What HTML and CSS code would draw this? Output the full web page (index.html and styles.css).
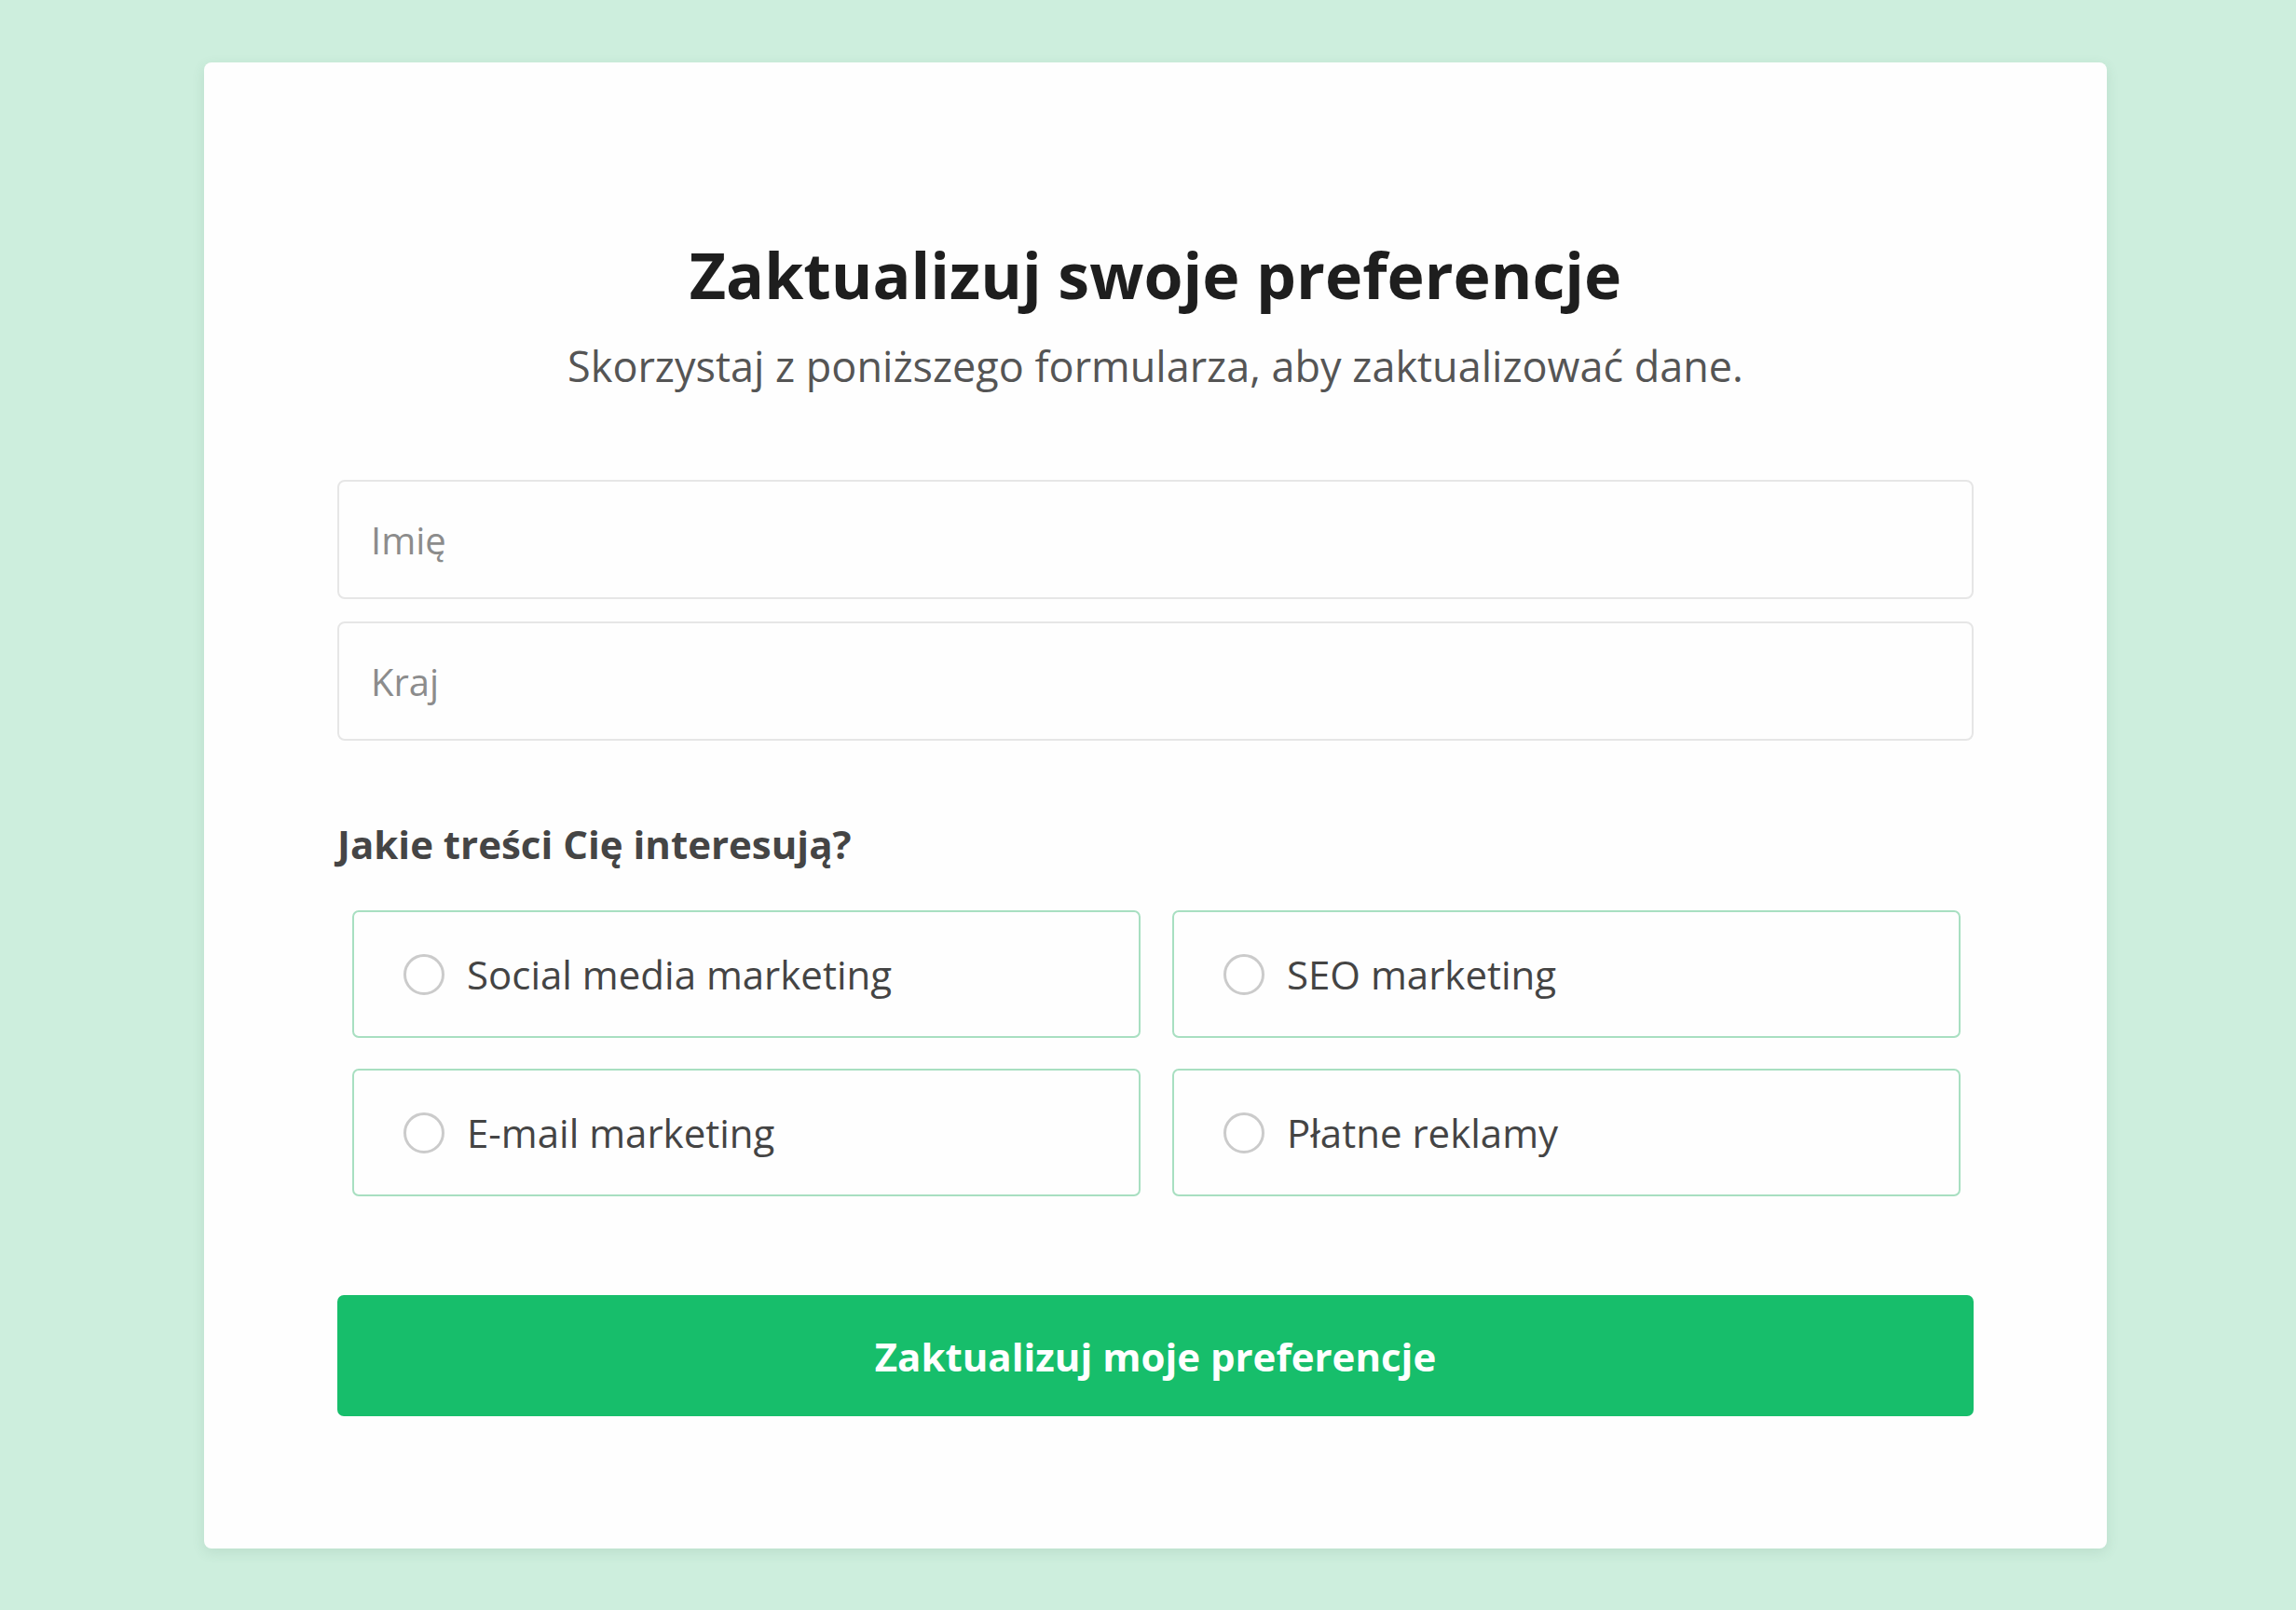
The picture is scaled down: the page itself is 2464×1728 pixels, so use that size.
FILE: index.html
```html
<!DOCTYPE html>
<html lang="pl">
<head>
<meta charset="utf-8">
<meta name="viewport" content="width=device-width, initial-scale=1.0">
<title>Zaktualizuj swoje preferencje</title>
<link rel="stylesheet" href="styles.css">
</head>
<body>

  <form class="card" id="prefform" onsubmit="return false;">
    <h1 class="title">Zaktualizuj swoje preferencje</h1>
    <p class="subtitle">Skorzystaj z poniższego formularza, aby zaktualizować dane.</p>

    <div class="fields">
      <input class="field" type="text" name="name" placeholder="Imię">
      <input class="field" type="text" name="country" placeholder="Kraj">
    </div>

    <label class="question">Jakie treści Cię interesują?</label>

    <div class="options">
      <label class="option"><input type="radio" name="topic" value="social"><span>Social media marketing</span></label>
      <label class="option"><input type="radio" name="topic" value="seo"><span>SEO marketing</span></label>
      <label class="option"><input type="radio" name="topic" value="email"><span>E-mail marketing</span></label>
      <label class="option"><input type="radio" name="topic" value="ads"><span>Płatne reklamy</span></label>
    </div>

    <button class="submit" type="submit">Zaktualizuj moje preferencje</button>
  </form>

</body>
</html>
```

FILE: styles.css
```css
html, body {
  margin: 0;
  padding: 0;
}

body {
  background: #cdeedd;
  font-family: "Open Sans", "Noto Sans", "Liberation Sans", sans-serif;
  color: #444;
  padding: 67px 203px 65px 219px;
}

.card {
  box-sizing: border-box;
  width: 2042px;
  background: #fefefe;
  border-radius: 8px;
  box-shadow: 0 4px 14px rgba(60, 110, 85, 0.12);
  padding: 186px 143px 142px 143px;
  display: flex;
  flex-direction: column;
}

.title {
  margin: 0;
  font-size: 68px;
  line-height: 83px;
  font-weight: 700;
  color: #1e1e1e;
  text-align: center;
}

.subtitle {
  margin: 29px 0 0 0;
  font-size: 45px;
  line-height: 56px;
  color: #555;
  text-align: center;
}

.fields {
  margin-top: 94px;
  display: flex;
  flex-direction: column;
  gap: 24px;
}

.field {
  box-sizing: border-box;
  height: 128px;
  width: 100%;
  border: 2px solid #e6e6e6;
  border-radius: 8px;
  background: #fefefe;
  padding: 0 34px;
  font-family: inherit;
  font-size: 40px;
  color: #333;
  outline: none;
}

.field::placeholder {
  color: #8c8c8c;
}

.question {
  display: block;
  margin-top: 83px;
  font-size: 42px;
  line-height: 55px;
  font-weight: 700;
  color: #454545;
}

.options {
  margin: 44px 14px 0 16px;
  display: grid;
  grid-template-columns: 1fr 1fr;
  column-gap: 34px;
  row-gap: 33px;
}

.option {
  box-sizing: border-box;
  height: 137px;
  border: 2px solid #a8dfc1;
  border-radius: 7px;
  display: flex;
  align-items: center;
  gap: 24px;
  padding-left: 53px;
  font-size: 42px;
  color: #444;
  cursor: pointer;
}

.option input {
  appearance: none;
  -webkit-appearance: none;
  box-sizing: border-box;
  margin: 0;
  width: 44px;
  height: 44px;
  border: 3px solid #cbcbcb;
  border-radius: 50%;
  background: #fff;
  flex: none;
}

.option input:checked {
  border-color: #17be6b;
  box-shadow: inset 0 0 0 9px #fff;
  background: #17be6b;
}

.submit {
  margin-top: 106px;
  height: 130px;
  border: none;
  border-radius: 7px;
  background: #17be6b;
  color: #fff;
  font-family: inherit;
  font-size: 42px;
  font-weight: 700;
  cursor: pointer;
}
```
